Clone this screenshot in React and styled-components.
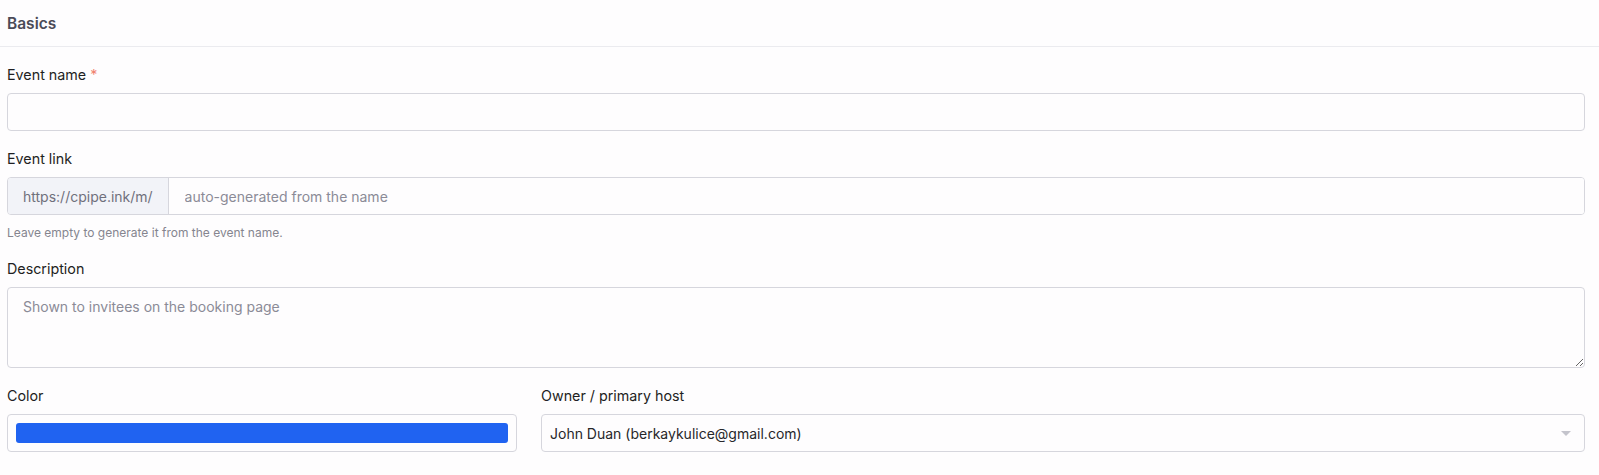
import React, { useState } from "react";
import styled, { createGlobalStyle } from "styled-components";

const GlobalStyle = createGlobalStyle`
    html, body {
        margin: 0;
        padding: 0;
        background: #fefdfe;
    }
    body {
        font-family: Inter, "Noto Sans", "Liberation Sans", sans-serif;
        color: #27272a;
    }
    * {
        box-sizing: border-box;
    }
`;

const App = () => {
    // 폼 값
    const [form, setForm] = useState({
        name: "",
        slug: "",
        description: "",
        color: "#2063f1",
        owner: "john",
    });

    const handleChange = (e) => {
        const { name, value } = e.target;
        setForm({ ...form, [name]: value });
    };

    return (
        <Page>
            <GlobalStyle />
            <Header>
                <Title>Basics</Title>
            </Header>
            <Body>
                <Field>
                    <Label>
                        Event name <Required>*</Required>
                    </Label>
                    <Input
                        type="text"
                        name="name"
                        value={form.name}
                        onChange={handleChange}
                    />
                </Field>
                <Field>
                    <Label>Event link</Label>
                    <LinkGroup>
                        <Prefix>https://cpipe.ink/m/</Prefix>
                        <LinkInput
                            type="text"
                            name="slug"
                            placeholder="auto-generated from the name"
                            value={form.slug}
                            onChange={handleChange}
                        />
                    </LinkGroup>
                    <Hint>Leave empty to generate it from the event name.</Hint>
                </Field>
                <Field>
                    <Label>Description</Label>
                    <TextArea
                        name="description"
                        placeholder="Shown to invitees on the booking page"
                        value={form.description}
                        onChange={handleChange}
                    />
                </Field>
                <Row>
                    <Field span={4}>
                        <Label>Color</Label>
                        <ColorBox>
                            <Swatch color={form.color} />
                        </ColorBox>
                    </Field>
                    <Field span={8}>
                        <Label>Owner / primary host</Label>
                        <SelectWrap>
                            <Select
                                name="owner"
                                value={form.owner}
                                onChange={handleChange}
                            >
                                <option value="john">
                                    John Duan (berkaykulice@gmail.com)
                                </option>
                            </Select>
                            <Caret />
                        </SelectWrap>
                    </Field>
                </Row>
            </Body>
        </Page>
    );
};

const Page = styled.div`
    width: 100%;
    min-height: 475px;
`;

const Header = styled.div`
    height: 47px;
    padding: 0 7px;
    display: flex;
    align-items: center;
    border-bottom: 1px solid #ebebef;
`;

const Title = styled.h2`
    margin: 0;
    font-size: 15.5px;
    font-weight: 600;
    color: #4b4b57;
`;

const Body = styled.div`
    padding: 18px 14px 0 7px;
`;

const Field = styled.div`
    margin-bottom: 18px;
    grid-column: span ${(props) => props.span || 12};
`;

const Label = styled.label`
    display: block;
    font-size: 14.3px;
    font-weight: 400;
    line-height: 20px;
    margin-bottom: 8px;
    color: #1f1f23;
`;

const Required = styled.span`
    color: #f0826e;
`;

const Input = styled.input`
    display: block;
    width: 100%;
    height: 38px;
    padding: 0 16px;
    font-family: inherit;
    font-size: 14px;
    color: #27272a;
    background: #fefdfe;
    border: 1px solid #d6d6dd;
    border-radius: 4px;
    outline: none;
`;

const LinkGroup = styled.div`
    display: flex;
    height: 38px;
    border: 1px solid #d6d6dd;
    border-radius: 4px;
    overflow: hidden;
`;

const Prefix = styled.span`
    display: flex;
    align-items: center;
    padding: 0 15px;
    font-size: 14px;
    color: #70707c;
    background: #f2f3f8;
    border-right: 1px solid #d6d6dd;
    white-space: nowrap;
`;

const LinkInput = styled.input`
    flex: 1;
    border: none;
    outline: none;
    padding: 0 16px;
    font-family: inherit;
    font-size: 14px;
    background: #fefdfe;
    color: #27272a;

    &::placeholder {
        color: #8b8b97;
    }
`;

const Hint = styled.div`
    margin-top: 10px;
    font-size: 12px;
    line-height: 16px;
    color: #85858f;
`;

const TextArea = styled.textarea`
    display: block;
    width: 100%;
    height: 81px;
    padding: 9px 15px;
    font-family: inherit;
    font-size: 14px;
    line-height: 20px;
    color: #27272a;
    background: #fefdfe;
    border: 1px solid #d6d6dd;
    border-radius: 4px;
    outline: none;
    resize: vertical;

    &::placeholder {
        color: #8b8b97;
    }
`;

const Row = styled.div`
    display: grid;
    grid-template-columns: repeat(12, 1fr);
    column-gap: 24px;
`;

const ColorBox = styled.div`
    height: 38px;
    padding: 8px 8px;
    border: 1px solid #d6d6dd;
    border-radius: 4px;
    background: #fefdfe;
`;

const Swatch = styled.div`
    height: 100%;
    border-radius: 3px;
    background: ${(props) => props.color};
`;

const SelectWrap = styled.div`
    position: relative;
`;

const Select = styled.select`
    display: block;
    width: 100%;
    height: 38px;
    padding: 0 36px 0 8px;
    font-family: inherit;
    font-size: 14px;
    color: #27272a;
    background: #fefdfe;
    border: 1px solid #d6d6dd;
    border-radius: 4px;
    outline: none;
    appearance: none;
`;

const Caret = styled.span`
    position: absolute;
    right: 14px;
    top: 50%;
    margin-top: -2px;
    width: 0;
    height: 0;
    border-left: 5px solid transparent;
    border-right: 5px solid transparent;
    border-top: 5px solid #c4c4cc;
    pointer-events: none;
`;

export default App;
